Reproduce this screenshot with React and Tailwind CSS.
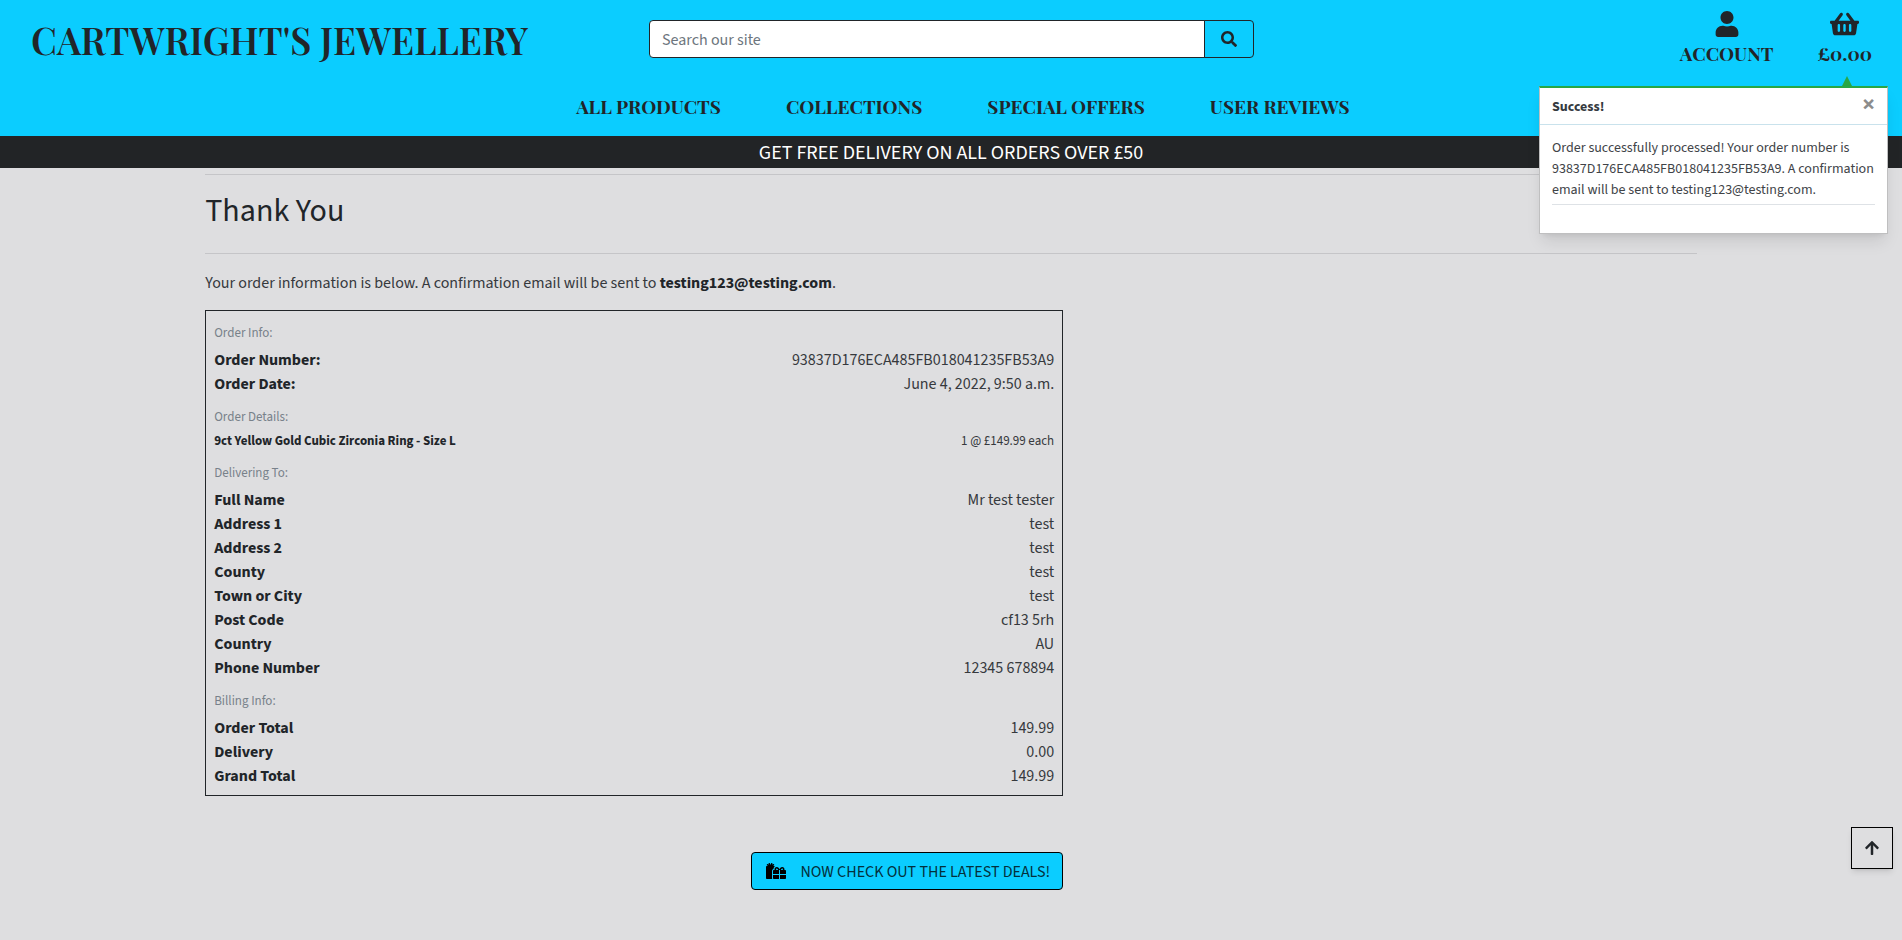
import { FaUser, FaShoppingBasket, FaSearch, FaGifts, FaArrowUp } from "react-icons/fa";

const groups = [
  {
    title: "Order Info:",
    rows: [
      ["Order Number:", "93837D176ECA485FB018041235FB53A9"],
      ["Order Date:", "June 4, 2022, 9:50 a.m."],
    ],
  },
  {
    title: "Order Details:",
    small: true,
    rows: [["9ct Yellow Gold Cubic Zirconia Ring - Size L", "1 @ £149.99 each"]],
  },
  {
    title: "Delivering To:",
    rows: [
      ["Full Name", "Mr test tester"],
      ["Address 1", "test"],
      ["Address 2", "test"],
      ["County", "test"],
      ["Town or City", "test"],
      ["Post Code", "cf13 5rh"],
      ["Country", "AU"],
      ["Phone Number", "12345 678894"],
    ],
  },
  {
    title: "Billing Info:",
    rows: [
      ["Order Total", "149.99"],
      ["Delivery", "0.00"],
      ["Grand Total", "149.99"],
    ],
  },
];

const navItems = ["ALL PRODUCTS", "COLLECTIONS", "SPECIAL OFFERS", "USER REVIEWS"];

const serif = "font-['Playfair_Display','Liberation_Serif',serif]";

function Header() {
  return (
    <header className="bg-[#0bcdff]">
      <div className="grid h-20 grid-cols-3 items-start">
        <a href="#" className={`${serif} mt-4 ml-[31px] text-[37px] leading-[48px] font-semibold whitespace-nowrap`}>
          CARTWRIGHT'S JEWELLERY
        </a>
        <form className="mr-3.5 ml-[15px] mt-5 flex h-[38px]" onSubmit={(e) => e.preventDefault()}>
          <input
            type="text"
            aria-label="Search our site"
            placeholder="Search our site"
            className="min-w-0 flex-1 rounded-l border border-[#212529] bg-white px-3 pt-0.5 placeholder:text-[#6c757d]"
          />
          <button
            type="submit"
            aria-label="Search"
            className="-ml-px flex w-[50px] items-center justify-center rounded-r border border-[#212529]"
          >
            <FaSearch />
          </button>
        </form>
        <nav className={`${serif} mr-[30px] flex justify-end gap-11 text-[19px] leading-6 font-bold`}>
          <a href="#" className="flex flex-col items-center pt-[11px]">
            <FaUser className="h-[26px] w-[26px]" />
            <span className="mt-1">ACCOUNT</span>
          </a>
          <a href="#" className="flex flex-col items-center pt-[11px]">
            <FaShoppingBasket className="h-[26px] w-[29px]" />
            <span className="mt-1">£0.00</span>
          </a>
        </nav>
      </div>
      <nav className={`${serif} flex h-14 justify-center gap-[65px] pt-3.5 pl-6 text-[19px] leading-6 font-bold`}>
        {navItems.map((item) => (
          <a key={item} href="#">
            {item}
          </a>
        ))}
      </nav>
    </header>
  );
}

function Toast() {
  return (
    <div role="status" className="absolute top-[76px] right-[14px] w-[349px]">
      <div className="mr-9 ml-auto h-0 w-0 border-x-[5px] border-b-10 border-x-transparent border-b-[#28a745]" />
      <div className="border border-t-2 border-[#bfbfc0] border-t-[#28a745] bg-white text-sm shadow-lg">
        <div className="flex h-[37px] items-center justify-between border-b border-[#c9e2ec] px-3">
          <strong className="pt-0.5 font-bold text-[#343a40]">Success!</strong>
          <button type="button" aria-label="Close" className="pb-0.5 text-[24px] leading-none font-bold text-[#8c8c8c]">
            ×
          </button>
        </div>
        <div className="px-3 pt-[13px] pb-7">
          <p className="border-b border-[#dee2e6] pb-[3px] leading-[21px] text-[#404347]">
            Order successfully processed! Your order number is 93837D176ECA485FB018041235FB53A9. A confirmation email
            will be sent to testing123@testing.com.
          </p>
        </div>
      </div>
    </div>
  );
}

function OrderTable() {
  return (
    <table className="w-full border-separate border-spacing-0 border border-[#212529] px-2 pt-px pb-[7px] text-left">
      {groups.map((group) => (
        <tbody key={group.title}>
          <tr>
            <th
              colSpan={2}
              scope="colgroup"
              className={`pt-[9px] text-[13px] leading-6 font-normal text-[#78818a] ${group.small ? "pb-0" : "pb-[3px]"}`}
            >
              {group.title}
            </th>
          </tr>
          {group.rows.map(([label, value]) => (
            <tr key={label} className={group.small ? "text-[13px] leading-[21px]" : "text-base leading-6"}>
              <th scope="row" className={`px-0 pb-0 font-bold ${group.small ? "pt-0.5" : "pt-0"}`}>
                {label}
              </th>
              <td className={`px-0 pb-0 text-right text-[#36393d] ${group.small ? "pt-0.5" : "pt-0"}`}>{value}</td>
            </tr>
          ))}
        </tbody>
      ))}
    </table>
  );
}

export default function App() {
  return (
    <div className="relative min-h-screen bg-[#dedee0] font-['Source_Sans_Pro','Source_Sans_3','Noto_Sans_CJK_JP',sans-serif] text-base font-normal text-[#212529]">
      <Header />
      <p className="h-8 bg-[#222426] pt-px text-center text-[20px] leading-8 text-white">
        GET FREE DELIVERY ON ALL ORDERS OVER £50
      </p>
      <main className="mx-auto w-4/5 px-[15px] pt-1.5 pb-12">
        <h1 className="border-y border-[#c5c5c8] pt-[17px] pb-[23px] text-[32px] leading-[38px]">Thank You</h1>
        <p className="mt-[17px] mb-[15px] leading-6 text-[#36393d]">
          Your order information is below. A confirmation email will be sent to{" "}
          <strong className="font-bold text-[#212529]">testing123@testing.com</strong>.
        </p>
        <div className="w-[858px] max-w-full">
          <OrderTable />
          <div className="mt-14 flex justify-end">
            <a
              href="#"
              className="flex h-[38px] items-center rounded border border-black bg-[#0bcdff] px-3 text-black"
            >
              <FaGifts className="mx-0.5 h-4 w-5" />
              <span className="ml-3 pt-0.5 text-[#04303b]">NOW CHECK OUT THE LATEST DEALS!</span>
            </a>
          </div>
        </div>
      </main>
      <Toast />
      <button
        type="button"
        aria-label="Back to top"
        className="fixed right-[9px] bottom-[71px] flex h-[42px] w-[42px] items-center justify-center border border-black shadow-md"
      >
        <FaArrowUp />
      </button>
    </div>
  );
}
